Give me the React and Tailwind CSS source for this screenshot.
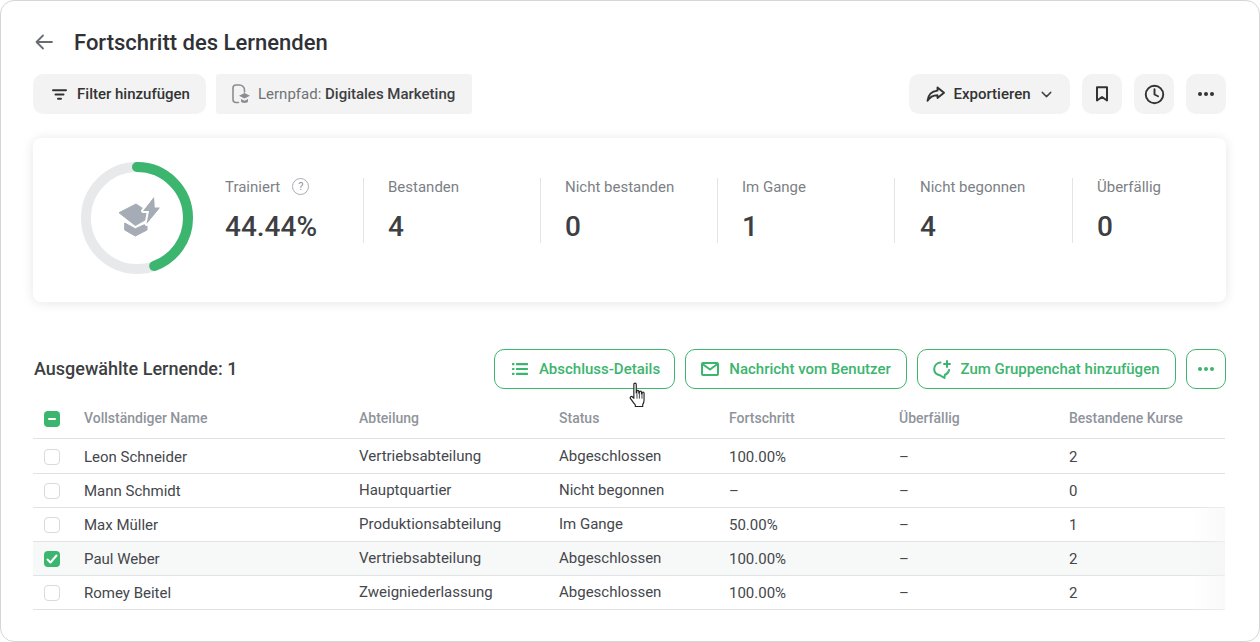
import React from "react";
import { ChevronDown, Clock } from "lucide-react";

const Dots = ({ className = "" }) => (
  <svg width="16" height="4" viewBox="0 0 16 4" className={className} fill="currentColor">
    <circle cx="2" cy="2" r="2" />
    <circle cx="8" cy="2" r="2" />
    <circle cx="14" cy="2" r="2" />
  </svg>
);

const BackArrow = () => (
  <svg width="18" height="16" viewBox="0 0 18 16" fill="none" stroke="#696c72" strokeWidth="1.800" strokeLinecap="round" strokeLinejoin="round">
    <path d="M17 8H1.500M8 1.500 1.500 8 8 14.500" />
  </svg>
);

const FilterIcon = () => (
  <svg width="15" height="11" viewBox="0 0 15 11" fill="none" stroke="#333" strokeWidth="2" strokeLinecap="round">
    <path d="M1 1.200h13M3.500 5.500h8M6 9.800h3" />
  </svg>
);

const PathIcon = () => (
  <svg width="18" height="20" viewBox="0 0 18 20" fill="none">
    <path d="M6.500 18.500H4A3 3 0 0 1 1 15.500V4A3 3 0 0 1 4 1h3.500a5 5 0 0 1 5 5v2" stroke="#8a8d92" strokeWidth="1.600" strokeLinecap="round" />
    <path d="M12.500 9 18 11.800l-5.500 2.700L7 11.800z" fill="#8a8d92" />
    <path d="M9 15v2.300c0 1 1.500 1.700 3.500 1.700s3.500-.7 3.500-1.700V15l-3.500 1.700z" fill="#8a8d92" />
  </svg>
);

const ShareIcon = () => (
  <svg width="19" height="16" viewBox="0 0 19 16" fill="none" stroke="#333" strokeWidth="1.900" strokeLinejoin="round" strokeLinecap="round">
    <path d="M11.500 1.500 18 6.800l-6.500 5.200V9.200C7 9.200 3.800 10.800 1.500 14.800 2 9.500 5.500 5.300 11.500 4.600z" />
  </svg>
);

const BookmarkIcon = () => (
  <svg width="14" height="16" viewBox="0 0 14 16" fill="none" stroke="#333" strokeWidth="2" strokeLinejoin="round">
    <path d="M2 1.200h10v13.300l-5-3.500-5 3.500z" />
  </svg>
);

const ListIcon = () => (
  <svg width="16" height="12" viewBox="0 0 16 12" fill="#3cb56e">
    <rect x="0" y="0" width="2.400" height="2.200" rx="0.500" />
    <rect x="0" y="4.900" width="2.400" height="2.200" rx="0.500" />
    <rect x="0" y="9.800" width="2.400" height="2.200" rx="0.500" />
    <rect x="4" y="0" width="12" height="2.200" rx="0.500" />
    <rect x="4" y="4.900" width="12" height="2.200" rx="0.500" />
    <rect x="4" y="9.800" width="12" height="2.200" rx="0.500" />
  </svg>
);

const MailIcon = () => (
  <svg width="18" height="14" viewBox="0 0 18 14" fill="none" stroke="#3cb56e" strokeWidth="2" strokeLinejoin="round">
    <rect x="1" y="1" width="16" height="12" rx="1" />
    <path d="M1.500 2 9 7.500 16.500 2" />
  </svg>
);

const ChatPlus = () => (
  <svg width="19" height="19" viewBox="0 0 19 19" fill="none" stroke="#3cb56e" strokeWidth="2" strokeLinecap="round" strokeLinejoin="round">
    <path d="M7.500 2.500C3.800 3 1.200 5.800 1.200 9c0 3 2.300 5.500 5.500 6.200l4.800 2.800.3-3c2.400-1 3.800-2.700 4.300-5" />
    <path d="M14 1v6M11 4h6" />
  </svg>
);

const HandCursor = () => (
  <svg width="19" height="25" viewBox="0 0 17 24" className="absolute left-[134px] top-[33px]">
    <path
      d="M5 2.200c0-1.500 2.300-1.500 2.300 0v8.300l.5-.1V9c0-1.300 2-1.300 2 0v1.700l.5.100V9.700c0-1.300 2-1.300 2 0v1.500l.5.100v-.7c0-1.300 2-1.300 2 0v6.600c0 2-.5 3.200-1.300 4.500v2H6.400v-1.700c-1.500-1.500-3-3.800-4.600-6.100-1-1.500.8-2.800 2-1.500L5 15.600z"
      fill="#fff"
      stroke="#222"
      strokeWidth="1.100"
      strokeLinejoin="round"
    />
    <path d="M8 11v5M10.300 11v5M12.800 11v5" stroke="#222" strokeWidth="0.800" />
  </svg>
);

const CapBolt = () => (
  <svg width="54" height="50" viewBox="0 0 54 50" className="absolute left-[31px] top-[30px]" fill="#a5acb5">
    <path d="M7 20.700 24 12 33 18 36.700 26 23.300 33.500z" strokeLinejoin="round" stroke="#a5acb5" strokeWidth="1" />
    <path d="M12.700 31 23.300 36.800 35 31.500V38L23.300 44 12.700 38z" strokeLinejoin="round" stroke="#a5acb5" strokeWidth="1" />
    <path d="M42 5 31 19H37L34.500 32 48 15.500H42.500z" strokeLinejoin="round" stroke="#ffffff" strokeWidth="4" paintOrder="stroke" />
    <path d="M42 5.500 32 18.500H38L35.500 30.500 47.500 16H42.500z" strokeLinejoin="round" />
  </svg>
);

const Donut = () => (
  <div className="relative w-[112px] h-[112px] shrink-0 mb-1">
    <svg width="112" height="112" viewBox="0 0 112 112" fill="none">
      <circle cx="56" cy="56" r="51" stroke="#e7e9eb" strokeWidth="10" />
      <circle
        cx="56"
        cy="56"
        r="51"
        stroke="#3cb56e"
        strokeWidth="10"
        strokeLinecap="round"
        strokeDasharray="142.400 320.440"
        transform="rotate(-90 56 56)"
      />
    </svg>
    <CapBolt />
  </div>
);

const Stat = ({ label, value, className = "w-[177px] pl-6" }) => (
  <div className={`h-[65px] mb-5 shrink-0 border-l border-[#e3e4e6] flex flex-col ${className}`}>
    <div className="text-[15px] leading-[18px] text-[#7c7f85]">{label}</div>
    <div className="text-[28px] leading-[32px] font-medium text-[#3d3f43] mt-[15px]">{value}</div>
  </div>
);

const GreenButton = ({ icon, children, className = "" }) => (
  <button className={`h-10 rounded-[10px] border border-[#3cb56e] flex items-center justify-center text-[15px] font-medium text-[#3cb56e] bg-white ${className}`}>
    {icon}
    {children}
  </button>
);

const GrayIconButton = ({ children }) => (
  <button className="w-10 h-10 rounded-[10px] bg-[#f3f3f3] flex items-center justify-center text-[#333]">{children}</button>
);

const COLS = "grid grid-cols-[40px_275px_200px_170px_170px_170px_1fr] items-center";

const rows = [
  ["Leon Schneider", "Vertriebsabteilung", "Abgeschlossen", "100.00%", "–", "2", false],
  ["Mann Schmidt", "Hauptquartier", "Nicht begonnen", "–", "–", "0", false],
  ["Max Müller", "Produktionsabteilung", "Im Gange", "50.00%", "–", "1", false],
  ["Paul Weber", "Vertriebsabteilung", "Abgeschlossen", "100.00%", "–", "2", true],
  ["Romey Beitel", "Zweigniederlassung", "Abgeschlossen", "100.00%", "–", "2", false],
];

const Check = ({ state }) => {
  if (state === "none") {
    return <span className="block w-4 h-4 rounded-[4px] border border-[#d9dadc] bg-white" />;
  }
  return (
    <span className="flex w-4 h-4 rounded-[4px] bg-[#3cb56e] items-center justify-center">
      {state === "check" ? (
        <svg width="12" height="10" viewBox="0 0 12 10" fill="none" stroke="#fff" strokeWidth="2" strokeLinecap="round" strokeLinejoin="round">
          <path d="M1.500 5.500 4.500 8.500 10.500 1.500" />
        </svg>
      ) : (
        <span className="block w-2 h-[2px] rounded-sm bg-white" />
      )}
    </span>
  );
};

export default function App() {
  return (
    <div className="w-[1260px] h-[642px] overflow-hidden bg-white font-['Roboto',sans-serif]">
      <div className="h-full rounded-[14px] border border-[#d6d6d6] px-8 pt-[24px] bg-white">
        <div className="flex items-center h-[34px] pl-[2px]">
          <BackArrow />
          <h1 className="ml-[21px] pt-[1px] text-[22px] font-medium leading-[34px] text-[#2f3136]">Fortschritt des Lernenden</h1>
        </div>

        <div className="flex items-center justify-between mt-[15px] w-[1193px]">
          <div className="flex gap-[10px]">
            <button className="h-10 w-[173px] pl-[3px] rounded-[10px] bg-[#f3f3f3] flex items-center justify-center gap-[10px] text-[15px] font-medium text-[#333]">
              <FilterIcon />
              Filter hinzufügen
            </button>
            <div className="h-10 w-[256px] rounded-[3px] bg-[#f3f3f3] flex items-center pl-[16px] gap-[8px] text-[15px] text-[#6f7277]">
              <PathIcon />
              <span>
                Lernpfad: <span className="font-medium text-[#3d3f43]">Digitales Marketing</span>
              </span>
            </div>
          </div>
          <div className="flex gap-3">
            <button className="h-10 w-[161px] pl-[2px] rounded-[10px] bg-[#f3f3f3] flex items-center justify-center gap-[8px] text-[15px] font-medium text-[#333]">
              <ShareIcon />
              Exportieren
              <ChevronDown size={17} strokeWidth={2} className="-ml-[1px] text-[#444]" />
            </button>
            <GrayIconButton>
              <BookmarkIcon />
            </GrayIconButton>
            <GrayIconButton>
              <Clock size={21} strokeWidth={2.200} />
            </GrayIconButton>
            <GrayIconButton>
              <Dots />
            </GrayIconButton>
          </div>
        </div>

        <div className="mt-6 w-[1193px] h-[164px] rounded-lg bg-white shadow-[0_1px_12px_rgba(0,0,0,0.1)] flex items-center pl-12">
          <Donut />
          <div className="ml-8 w-[138px] shrink-0 h-[65px] mb-5 flex flex-col">
            <div className="flex items-center gap-3 text-[15px] leading-[18px] text-[#7c7f85]">
              Trainiert
              <span className="flex w-[17px] h-[17px] items-center justify-center rounded-full border border-[#a9acb1] text-[11px] leading-none text-[#8f9298]">?</span>
            </div>
            <div className="text-[28px] leading-[32px] font-medium text-[#3d3f43] mt-[15px]">44.44%</div>
          </div>
          <Stat label="Bestanden" value="4" />
          <Stat label="Nicht bestanden" value="0" />
          <Stat label="Im Gange" value="1" />
          <Stat label="Nicht begonnen" value="4" className="w-[178px] pl-[25px]" />
          <Stat label="Überfällig" value="0" className="w-[150px] pl-6" />
        </div>

        <div className="mt-[47px] flex items-center h-10 w-[1193px]">
          <h2 className="pl-[1px] -mt-[1px] text-[18px] font-medium text-[#3d3f43]">Ausgewählte Lernende: 1</h2>
          <div className="ml-auto flex gap-[10px]">
            <div className="relative">
              <GreenButton className="w-[181px] gap-[11px] pl-[3px]" icon={<ListIcon />}>
                Abschluss-Details
              </GreenButton>
              <HandCursor />
            </div>
            <GreenButton className="w-[222px] gap-[10px]" icon={<MailIcon />}>
              Nachricht vom Benutzer
            </GreenButton>
            <GreenButton className="w-[259px] gap-[8px]" icon={<ChatPlus />}>
              Zum Gruppenchat hinzufügen
            </GreenButton>
            <GreenButton className="w-10">
              <Dots />
            </GreenButton>
          </div>
        </div>

        <div className="relative w-[1192px] mt-[10px]">
          <div className={`${COLS} h-[40px] border-b border-[#e1e2e4] pl-[11px] text-[14px] font-medium text-[#8f949b]`}>
            <Check state="minus" />
            <div>Vollständiger Name</div>
            <div>Abteilung</div>
            <div>Status</div>
            <div>Fortschritt</div>
            <div>Überfällig</div>
            <div>Bestandene Kurse</div>
          </div>
          {rows.map((r, i) => (
            <div
              key={r[0]}
              className={`${COLS} ${i === 0 ? "h-[35px] pt-[2px]" : "h-[34px]"} border-b border-[#e1e2e4] pl-[11px] text-[15px] text-[#44474c] ${r[6] ? "bg-[#f7f8f8]" : ""}`}
            >
              <Check state={r[6] ? "check" : "none"} />
              <div className="pt-[1px]">{r[0]}</div>
              <div className="-mt-[1px]">{r[1]}</div>
              <div className="-mt-[1px]">{r[2]}</div>
              <div className="pt-[1px]">{r[3]}</div>
              <div className="pt-[1px]">{r[4]}</div>
              <div className="pt-[1px]">{r[5]}</div>
            </div>
          ))}
          <div className="absolute right-0 top-[108px] bottom-0 w-[32px] bg-gradient-to-l from-[#f5f5f5]/60 to-transparent" />
        </div>
      </div>
    </div>
  );
}
